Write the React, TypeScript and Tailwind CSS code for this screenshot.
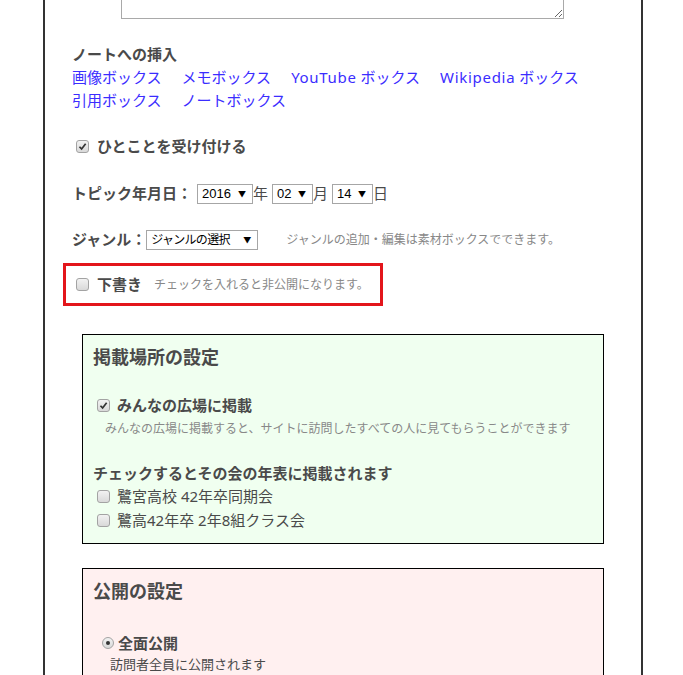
import React from 'react';

const Check = ({ checked = false }: { checked?: boolean }) => (
  <span className="inline-flex h-[13px] w-[13px] shrink-0 items-center justify-center rounded-[3px] border border-[#a3a3a3] bg-linear-to-b from-[#f2f2f2] to-[#d9d9d9]">
    {checked && (
      <svg viewBox="0 0 10 10" className="h-[9px] w-[9px]">
        <path d="M1.6 5.3 L4 7.7 L8.5 1.9" fill="none" stroke="#333" strokeWidth="1.9" />
      </svg>
    )}
  </span>
);

const Radio = () => (
  <span className="inline-flex h-[12px] w-[12px] shrink-0 items-center justify-center rounded-full border border-[#a3a3a3] bg-linear-to-b from-[#f2f2f2] to-[#d9d9d9]">
    <span className="h-[4px] w-[4px] rounded-full bg-[#333]" />
  </span>
);

interface SelectProps {
  label: string;
  widthClass: string;
  labelClass?: string;
}

const FakeSelect: React.FC<SelectProps> = ({ label, widthClass, labelClass = "font-['Liberation_Sans',sans-serif] text-[13px]" }) => (
  <span
    className={`inline-flex h-[20px] items-center justify-between border border-[#a6a6a6] bg-white pl-[4px] pr-[6px] text-black ${widthClass}`}
  >
    <span className={labelClass}>{label}</span>
    <span className="text-[8px] leading-none">▼</span>
  </span>
);

export default function App() {
  return (
    <div className="min-h-screen bg-white font-['Noto_Sans','Noto_Sans_CJK_JP',sans-serif] text-[#4a4a4a]">
      <div className="ml-[43px] min-h-[675px] w-[600px] overflow-hidden border-x-2 border-[#333] pl-[27px]">
        <textarea className="-mt-[81px] ml-[49px] block h-[100px] w-[443px] border border-[#a9a9a9] bg-white" />

        <h3 className="mt-[24px] text-[15px] font-bold leading-[23px]">ノートへの挿入</h3>
        <div className="text-[15px] leading-[23px] text-[#3b2dff]">
          <div className="flex gap-x-[20px]">
            <a href="#">画像ボックス</a>
            <a href="#">メモボックス</a>
            <a href="#"><span className="tracking-[0.7px]">YouTube</span> ボックス</a>
            <a href="#"><span className="tracking-[0.7px]">Wikipedia</span> ボックス</a>
          </div>
          <div className="flex gap-x-[20px]">
            <a href="#">引用ボックス</a>
            <a href="#">ノートボックス</a>
          </div>
        </div>

        <label className="mt-[23px] flex h-[23px] items-center gap-[8px] pl-[4px] text-[15px] font-bold">
          <Check checked />
          ひとことを受け付ける
        </label>

        <div className="mt-[23px] flex h-[25px] items-center text-[15px]">
          <span className="mr-[5px] font-bold">トピック年月日：</span>
          <FakeSelect label="2016" widthClass="w-[56px]" />
          <span className="mr-[4px]">年</span>
          <FakeSelect label="02" widthClass="w-[41px]" />
          <span className="mr-[4px]">月</span>
          <FakeSelect label="14" widthClass="w-[41px]" />
          <span>日</span>
        </div>

        <div className="mt-[21px] flex h-[25px] items-center text-[15px]">
          <span className="font-bold">ジャンル：</span>
          <FakeSelect
            label="ジャンルの選択"
            widthClass="w-[112px]"
            labelClass="text-[12px] tracking-[-0.7px]"
          />
          <span className="ml-[28px] text-[12px] text-[#888]">ジャンルの追加・編集は素材ボックスでできます。</span>
        </div>

        <div className="mt-[11px] -ml-[9px] flex h-[43px] w-[320px] items-center border-[3px] border-[#e3151b] pl-[10px]">
          <Check />
          <span className="ml-[8px] text-[15px] font-bold">下書き</span>
          <span className="ml-[12px] text-[12px] text-[#888]">チェックを入れると非公開になります。</span>
        </div>

        <section className="mt-[28px] ml-[10px] w-[522px] border border-black bg-[#f0fff0] pt-[10px] pb-[11px] pl-[10px]">
          <h2 className="text-[18px] font-bold leading-[24px]">掲載場所の設定</h2>
          <label className="mt-[25px] flex h-[22px] items-center gap-[7px] pl-[4px] text-[15px] font-bold">
            <Check checked />
            みんなの広場に掲載
          </label>
          <p className="mt-[4px] pl-[12px] text-[12px] leading-[18px] text-[#888]">
            みんなの広場に掲載すると、サイトに訪問したすべての人に見てもらうことができます
          </p>
          <h3 className="mt-[24px] text-[15px] font-bold leading-[22px]">チェックするとその会の年表に掲載されます</h3>
          {['鷺宮高校 42年卒同期会', '鷺高42年卒 2年8組クラス会'].map((name) => (
            <label key={name} className="flex h-[24px] items-center gap-[7px] pl-[4px] text-[15px]">
              <Check />
              {name}
            </label>
          ))}
        </section>

        <section className="mt-[24px] ml-[10px] w-[522px] border border-black bg-[#fff0f0] pt-[10px] pb-[40px] pl-[10px]">
          <h2 className="text-[18px] font-bold leading-[24px]">公開の設定</h2>
          <label className="mt-[29px] flex h-[22px] items-center gap-[4px] pl-[9px] text-[15px] font-bold">
            <Radio />
            全面公開
          </label>
          <p className="mt-[1px] pl-[17px] text-[13px] leading-[18px]">訪問者全員に公開されます</p>
        </section>
      </div>
    </div>
  );
}
